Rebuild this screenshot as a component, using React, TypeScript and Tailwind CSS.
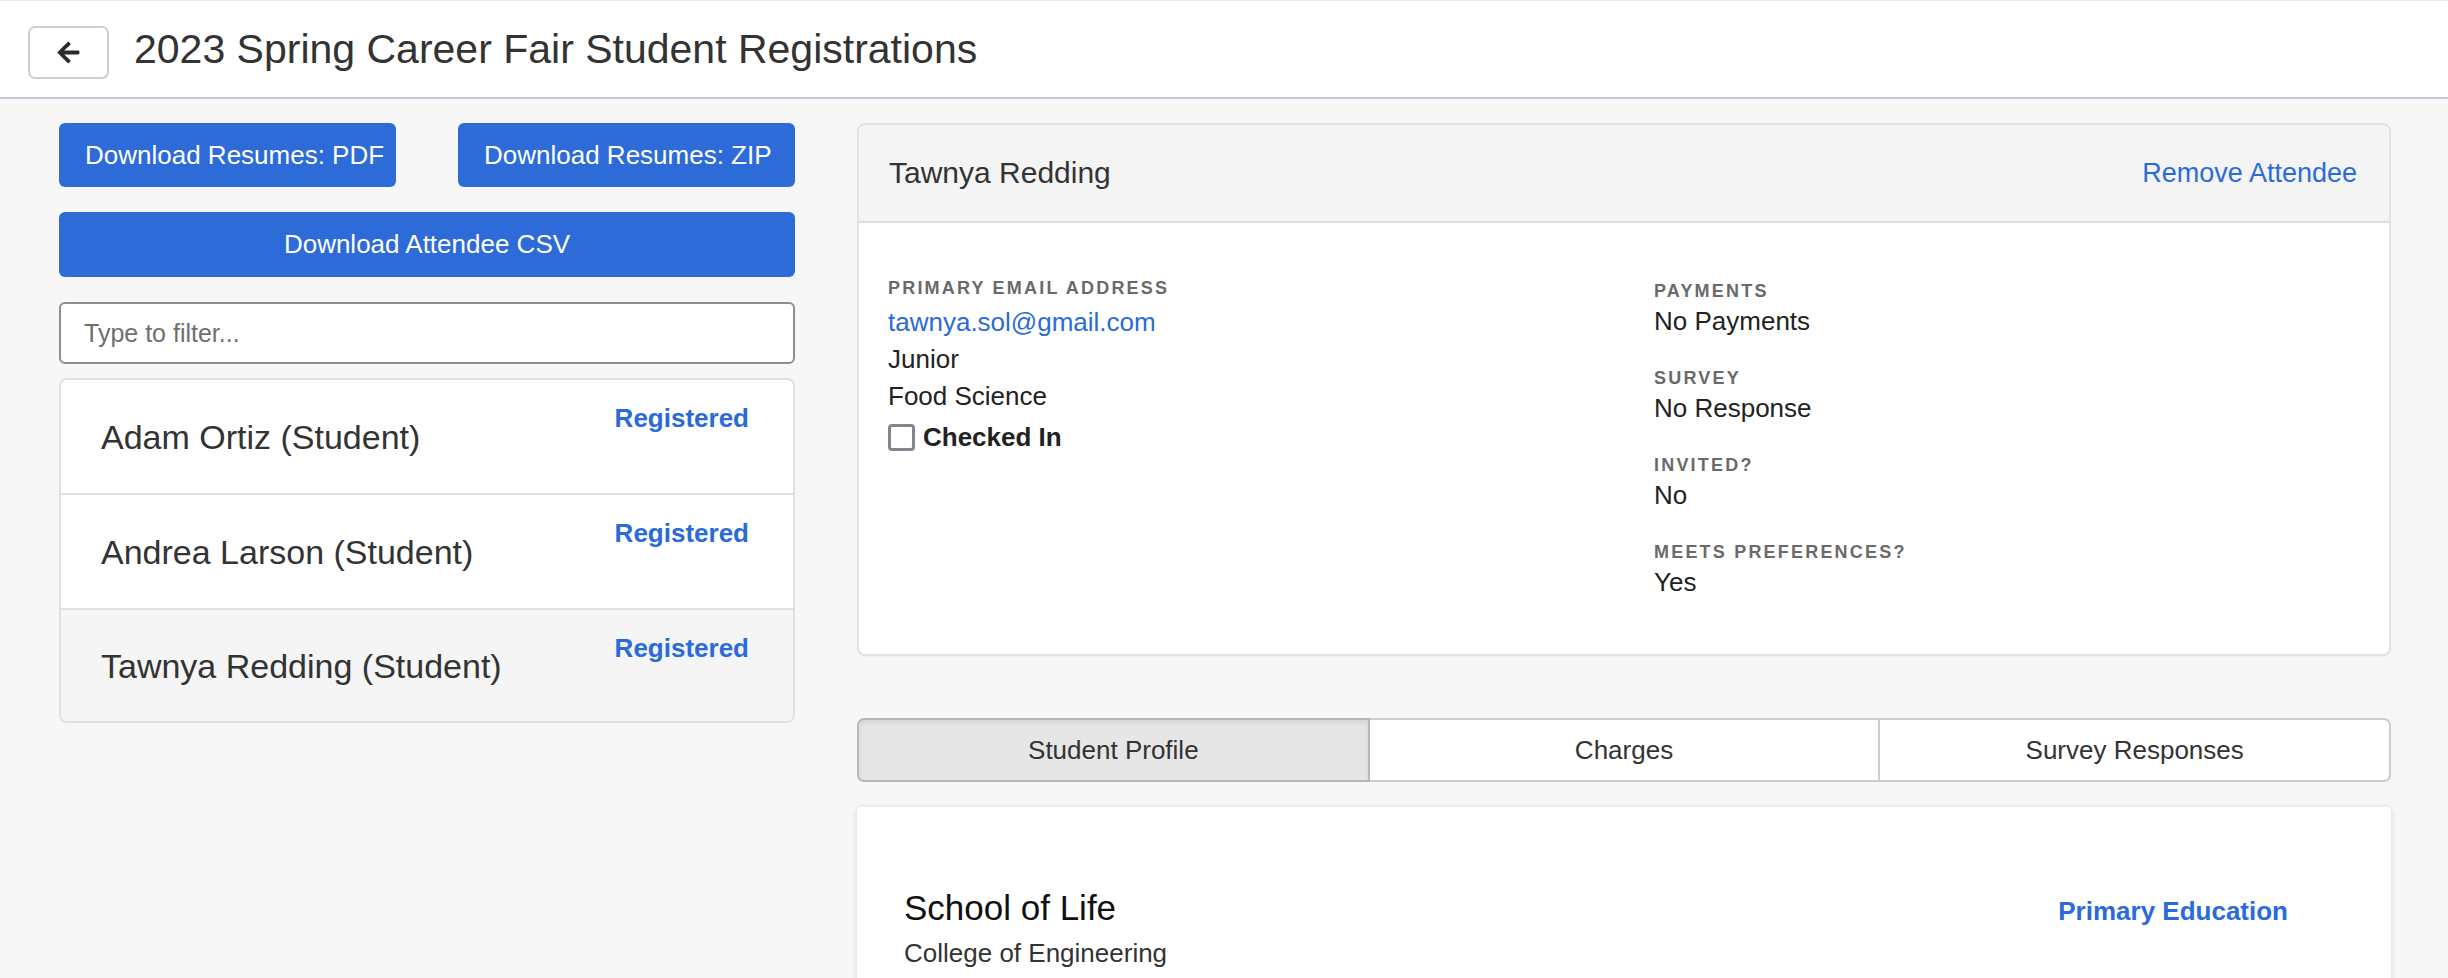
import React from "react";
import { FaArrowLeft } from "react-icons/fa";

const students = [
  { name: "Adam Ortiz (Student)", selected: false },
  { name: "Andrea Larson (Student)", selected: false },
  { name: "Tawnya Redding (Student)", selected: true },
];

function Label({ children }: { children: React.ReactNode }) {
  return (
    <div className="text-[18px] leading-[22px] font-bold tracking-[2.2px] text-[#6a6a6a] uppercase">
      {children}
    </div>
  );
}

export default function App() {
  return (
    <div className="h-screen overflow-hidden bg-[#f7f7f7] font-['Liberation_Sans',Arial,sans-serif] text-[#333]">
      <header className="h-[99px] bg-white border-t border-t-[#e4e7f1] border-b-2 border-b-[#c0c8d3] flex items-start pt-[24px] pl-[28px]">
        <button className="mt-[1px] w-[81px] h-[53px] border-2 border-[#d0d0d0] rounded-[7px] bg-white flex items-center justify-center text-[#2b2b2b]">
          <FaArrowLeft size={25} />
        </button>
        <h1 className="ml-[25px] text-[41px] leading-[48px] text-[#333]">
          2023 Spring Career Fair Student Registrations
        </h1>
      </header>

      <main className="flex gap-[62px] pl-[59px] pr-[57px] pt-[24px]">
        <div className="w-[736px] shrink-0 flex flex-col">
          <div className="grid grid-cols-2 gap-[62px]">
            <button className="h-[64px] rounded-[6px] bg-[#2d6bd8] text-white text-[26px] text-left pl-[26px] whitespace-nowrap">
              Download Resumes: PDF
            </button>
            <button className="h-[64px] rounded-[6px] bg-[#2d6bd8] text-white text-[26px] text-left pl-[26px] whitespace-nowrap">
              Download Resumes: ZIP
            </button>
          </div>
          <button className="mt-[25px] h-[65px] rounded-[6px] bg-[#2d6bd8] text-white text-[26px] text-center">
            Download Attendee CSV
          </button>
          <input
            className="mt-[25px] h-[62px] border-2 border-[#8e8e8e] rounded-[6px] px-[23px] text-[25px] bg-white text-[#333] placeholder:text-[#6f6f6f] outline-none"
            placeholder="Type to filter..."
          />
          <div className="mt-[14px] border-2 border-[#e0e0e0] rounded-[8px] overflow-hidden bg-white">
            {students.map((s, i) => (
              <div
                key={s.name}
                className={`flex justify-between pl-[40px] pr-[44px] ${
                  i < students.length - 1 ? "h-[115px] border-b-2 border-b-[#e0e0e0]" : "h-[111px]"
                } ${s.selected ? "bg-[#f5f5f5]" : "bg-white"}`}
              >
                <div className="self-center text-[34px] leading-[40px] text-[#333]">{s.name}</div>
                <div className="self-start mt-[23px] text-[26px] leading-[30px] font-bold text-[#2a6bd9]">
                  Registered
                </div>
              </div>
            ))}
          </div>
        </div>

        <div className="flex-1 flex flex-col min-w-0">
          <div className="border-2 border-[#e2e2e2] rounded-[8px] bg-white overflow-hidden shadow-[0_1px_2px_rgba(0,0,0,0.04)]">
            <div className="h-[98px] bg-[#f4f4f4] border-b-2 border-b-[#dedede] flex items-center justify-between pl-[30px] pr-[32px]">
              <div className="text-[30px] leading-[36px] text-[#333]">Tawnya Redding</div>
              <a className="text-[27px] leading-[32px] text-[#2a6bd9] cursor-pointer">Remove Attendee</a>
            </div>
            <div className="grid grid-cols-[766px_1fr] pl-[29px] pt-[54px] pb-[53px]">
              <div className="flex flex-col">
                <Label>Primary Email Address</Label>
                <a className="mt-[5px] text-[26px] leading-[37px] text-[#2a6bd9]">tawnya.sol@gmail.com</a>
                <div className="text-[26px] leading-[37px] text-[#222]">Junior</div>
                <div className="text-[26px] leading-[37px] text-[#222]">Food Science</div>
                <label className="mt-[4px] flex items-center gap-[8px]">
                  <span className="w-[27px] h-[27px] border-[3px] border-[#85858f] rounded-[4px] bg-white" />
                  <span className="text-[26px] leading-[37px] font-bold text-[#222]">Checked In</span>
                </label>
              </div>
              <div className="flex flex-col pt-[3px] gap-[27px]">
                <div>
                  <Label>Payments</Label>
                  <div className="mt-[1px] text-[26px] leading-[37px] text-[#222]">No Payments</div>
                </div>
                <div>
                  <Label>Survey</Label>
                  <div className="mt-[1px] text-[26px] leading-[37px] text-[#222]">No Response</div>
                </div>
                <div>
                  <Label>Invited?</Label>
                  <div className="mt-[1px] text-[26px] leading-[37px] text-[#222]">No</div>
                </div>
                <div>
                  <Label>Meets Preferences?</Label>
                  <div className="mt-[1px] text-[26px] leading-[37px] text-[#222]">Yes</div>
                </div>
              </div>
            </div>
          </div>

          <div className="mt-[62px] flex h-[64px] text-[26px] text-[#333]">
            <button className="flex-1 border-2 border-[#b8b8b8] rounded-l-[7px] bg-[#e6e6e6] shadow-[inset_0_3px_5px_rgba(0,0,0,0.08)]">
              Student Profile
            </button>
            <button className="flex-1 border-y-2 border-[#cdcdcd] bg-white">Charges</button>
            <button className="flex-1 border-2 border-[#cdcdcd] rounded-r-[7px] bg-white">Survey Responses</button>
          </div>

          <div className="mt-[25px] bg-white rounded-[4px] shadow-[0_1px_6px_rgba(0,0,0,0.15)] pt-[80px] pl-[47px] pr-[103px] pb-[120px]">
            <div className="flex items-baseline justify-between">
              <div className="text-[35px] leading-[42px] text-[#111]">School of Life</div>
              <div className="text-[26px] leading-[30px] font-bold text-[#2a6bd9]">Primary Education</div>
            </div>
            <div className="mt-[6px] text-[26px] leading-[37px] text-[#333]">College of Engineering</div>
          </div>
        </div>
      </main>
    </div>
  );
}
